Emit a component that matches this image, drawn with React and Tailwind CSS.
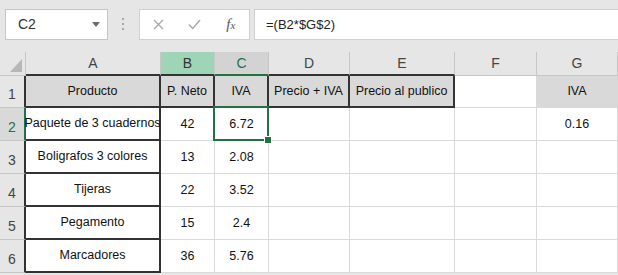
import React from "react";

const FONT = "font-['Liberation_Sans','Arial',sans-serif]";

const COLS = ["A", "B", "C", "D", "E", "F", "G"];
const WIDTHS = ["w-[135px]", "w-[54px]", "w-[54px]", "w-[81px]", "w-[105px]", "w-[82px]", "w-[81px]"];

const rows = [
  ["Producto", "P. Neto", "IVA", "Precio + IVA", "Precio al publico", "", "IVA"],
  ["Paquete de 3 cuadernos", "42", "6.72", "", "", "", "0.16"],
  ["Boligrafos 3 colores", "13", "2.08", "", "", "", ""],
  ["Tijeras", "22", "3.52", "", "", "", ""],
  ["Pegamento", "15", "2.4", "", "", "", ""],
  ["Marcadores", "36", "5.76", "", "", "", ""],
];

function cellClass(r, c) {
  let cls = "border-r border-b border-r-[#dadada] border-b-[#dadada] bg-white";
  if (r === 0 && c <= 4) {
    cls = "border-r-2 border-b-2 border-r-[#333] border-b-[#333] bg-[#d9d9d9]";
  } else if (r === 0 && c === 5) {
    cls = "border-r border-b border-r-[#d9d9d9] border-b-[#dadada] bg-white";
  } else if (r === 0 && c === 6) {
    cls = "border-r border-b border-r-[#d9d9d9] border-b-[#d9d9d9] bg-[#d9d9d9]";
  } else if (c === 0) {
    cls = "border-r-2 border-b-2 border-r-[#333] border-b-[#333] bg-white";
  }
  return cls;
}

function Toolbar() {
  return (
    <div className="h-[52px] flex items-start pt-[9px]">
      <div className="ml-[5px] w-[103px] h-[31px] bg-white border border-[#c6c6c6] flex items-center justify-between pl-[12px] pr-[7px]">
        <span className="text-[14px] text-[#333]">C2</span>
        <svg width="8" height="5" viewBox="0 0 8 5">
          <path d="M0 0 L8 0 L4 5 Z" fill="#6b6b6b" />
        </svg>
      </div>
      <div className="ml-[14px] mt-[9px] flex flex-col gap-[3px]">
        <div className="w-[2px] h-[2px] bg-[#a8a8a8]" />
        <div className="w-[2px] h-[2px] bg-[#a8a8a8]" />
        <div className="w-[2px] h-[2px] bg-[#a8a8a8]" />
      </div>
      <div className="ml-[15px] w-[111px] h-[31px] bg-white border border-[#d0d0d0] flex items-center">
        <div className="w-[37px] flex justify-center">
          <svg width="11" height="11" viewBox="0 0 11 11">
            <path d="M1 1 L10 10 M10 1 L1 10" stroke="#a8a8a8" strokeWidth="1.3" fill="none" />
          </svg>
        </div>
        <div className="w-[37px] flex justify-center">
          <svg width="13" height="11" viewBox="0 0 13 11">
            <path d="M1 5.5 L4.8 9.5 L12 1" stroke="#a8a8a8" strokeWidth="1.5" fill="none" />
          </svg>
        </div>
        <div className="w-[37px] flex justify-center items-baseline font-['Liberation_Serif',serif] italic text-[#555]">
          <span className="text-[15px] leading-none">f</span>
          <span className="text-[11px] leading-none">x</span>
        </div>
      </div>
      <div className="ml-[4px] flex-1 h-[31px] bg-white border border-[#d0d0d0] border-r-0 flex items-center pl-[11px]">
        <span className="text-[13px] text-[#222]">=(B2*$G$2)</span>
      </div>
    </div>
  );
}

function HeaderRow() {
  return (
    <div className="flex h-[24px]">
      <div className="w-[26px] shrink-0 border-r border-b border-[#c6c6c6] flex items-end justify-end pr-[3px] pb-[3px]">
        <svg width="12" height="13" viewBox="0 0 12 13">
          <path d="M12 0 L12 13 L0 13 Z" fill="#b7b7b7" />
        </svg>
      </div>
      {COLS.map((l, c) => {
        let cls = "bg-[#e6e6e6] text-[#444] border-r border-r-[#c6c6c6] border-b border-b-[#c6c6c6]";
        if (c === 1) cls = "bg-[#9fd5b7] text-[#333] border-r border-r-[#c6c6c6] border-b-2 border-b-[#333]";
        if (c === 2) cls = "bg-[#d3d3d3] text-[#217346] border-r border-r-[#c6c6c6] border-b-2 border-b-[#217346]";
        if (c === 0 || c === 3 || c === 4) cls = "bg-[#e6e6e6] text-[#444] border-r border-r-[#c6c6c6] border-b-2 border-b-[#333]";
        return (
          <div key={l} className={`${WIDTHS[c]} shrink-0 ${cls} flex items-center justify-center text-[14px]`}>
            {l}
          </div>
        );
      })}
    </div>
  );
}

function DataRow({ r, data }) {
  const h = r === 0 ? "h-[32px]" : "h-[33px]";
  const selected = r === 1;
  return (
    <div className={`flex ${h}`}>
      <div
        className={`w-[26px] shrink-0 flex items-end justify-center pb-[2px] text-[14px] border-b border-b-[#c6c6c6] ${
          selected
            ? "bg-[#d9d9d9] text-[#217346] border-r-2 border-r-[#217346]"
            : "bg-[#e6e6e6] text-[#444] border-r-2 border-r-[#333]"
        }`}
      >
        {r + 1}
      </div>
      {data.map((v, c) => (
        <div
          key={c}
          className={`${WIDTHS[c]} shrink-0 relative ${cellClass(r, c)} flex items-center justify-center text-[12.5px] text-[#111] whitespace-nowrap`}
        >
          {v}
          {selected && c === 2 && (
            <div className="absolute -left-[2px] -top-[2px] -right-[1px] -bottom-[1px] border-2 border-[#217346] z-10">
              <div className="absolute -right-[4px] -bottom-[4px] w-[6px] h-[6px] bg-[#217346] outline outline-1 outline-white" />
            </div>
          )}
        </div>
      ))}
    </div>
  );
}

export default function App() {
  return (
    <div className={`w-[618px] h-[275px] overflow-hidden bg-[#e6e6e6] ${FONT}`}>
      <Toolbar />
      <HeaderRow />
      {rows.map((d, r) => (
        <DataRow key={r} r={r} data={d} />
      ))}
    </div>
  );
}
